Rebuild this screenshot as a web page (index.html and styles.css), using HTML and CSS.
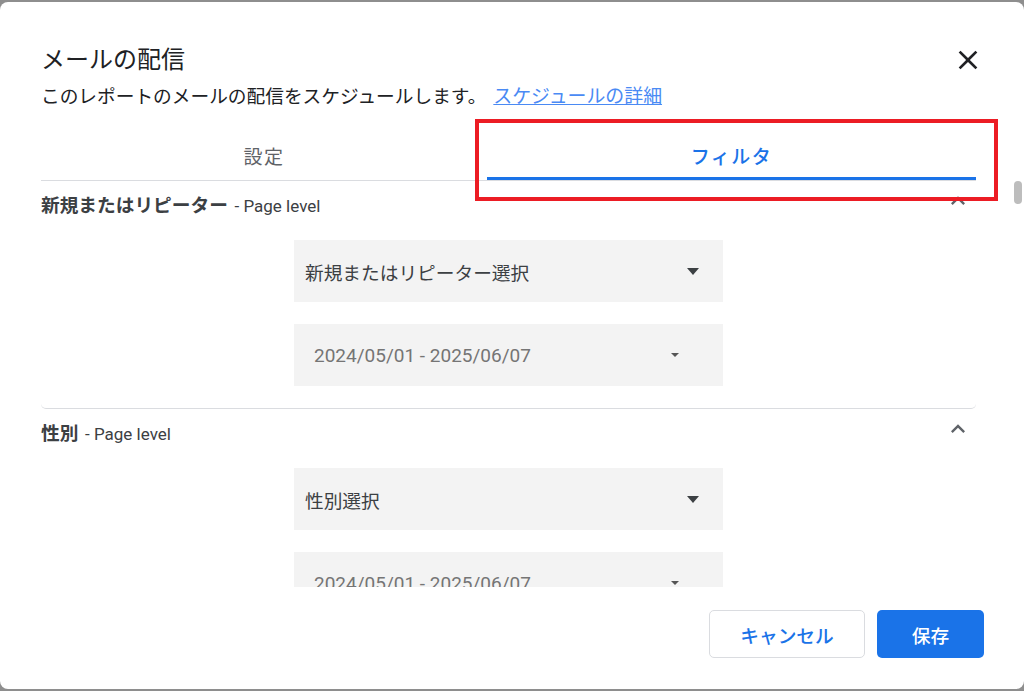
FILE: index.html
```html
<!DOCTYPE html>
<html lang="ja">
<head>
<meta charset="utf-8">
<title>メールの配信</title>
<link rel="stylesheet" href="styles.css">
</head>
<body>
<div class="page">
  <div class="dialog">
    <div class="header">
      <div class="title-row">
        <h1 class="title">メールの配信</h1>
        <svg class="close" viewBox="0 0 24 24" width="32" height="32"><path d="M19 6.41L17.59 5 12 10.59 6.41 5 5 6.41 10.59 12 5 17.59 6.41 19 12 13.41 17.59 19 19 17.59 13.41 12z" fill="#202124"/></svg>
      </div>
      <p class="subtitle">このレポートのメールの配信をスケジュールします。<a class="link" href="#">スケジュールの詳細</a></p>
    </div>
    <div class="tabs">
      <div class="tab">設定</div>
      <div class="tab active">フィルタ</div>
    </div>
    <div class="scroll">
      <div class="section">
        <div class="section-head">
          <span class="section-title"><b>新規またはリピーター</b> <span class="level">- Page level</span></span>
          <svg class="chev" viewBox="0 0 24 24" width="28" height="28"><path d="M12 8l-6 6 1.41 1.41L12 10.83l4.59 4.58L18 14z" fill="#5f6368"/></svg>
        </div>
        <div class="fields">
          <div class="select"><span>新規またはリピーター選択</span><i class="tri"></i></div>
          <div class="select date"><span>2024/05/01 - 2025/06/07</span><i class="tri small"></i></div>
        </div>
      </div>
      <div class="section">
        <div class="section-head">
          <span class="section-title"><b>性別</b> <span class="level">- Page level</span></span>
          <svg class="chev" viewBox="0 0 24 24" width="28" height="28"><path d="M12 8l-6 6 1.41 1.41L12 10.83l4.59 4.58L18 14z" fill="#5f6368"/></svg>
        </div>
        <div class="fields">
          <div class="select"><span>性別選択</span><i class="tri"></i></div>
          <div class="select date"><span>2024/05/01 - 2025/06/07</span><i class="tri small"></i></div>
        </div>
      </div>
    </div>
    <div class="footer">
      <button class="btn cancel">キャンセル</button>
      <button class="btn save">保存</button>
    </div>
    <div class="scroll-thumb"></div>
    <div class="highlight"></div>
  </div>
</div>
</body>
</html>
```
FILE: styles.css
```css
* { box-sizing: border-box; }
html, body { margin: 0; padding: 0; }
body {
  background: #8e8e8e;
  font-family: Roboto, "Noto Sans CJK JP", sans-serif;
  color: #202124;
  width: 1024px;
  height: 691px;
  overflow: hidden;
}
.page { padding-top: 2px; }
.dialog {
  position: relative;
  background: #fff;
  height: 687px;
  border-radius: 8px;
  display: flex;
  flex-direction: column;
}
.header { padding: 43px 40px 22px 41px; }
.title-row {
  display: flex;
  justify-content: space-between;
  align-items: center;
  height: 30px;
}
.title {
  margin: 0;
  font-size: 24px;
  line-height: 30px;
  font-weight: 400;
  color: #202124;
}
.close { display: block; margin-right: 0; }
.subtitle {
  margin: 10px 0 0;
  font-size: 18.7px;
  line-height: 24px;
  color: #202124;
}
.link { color: #4a8af4; text-decoration: underline; margin-left: 7px; font-size: 18.9px; }
.tabs {
  display: grid;
  grid-template-columns: 446px 489px;
  margin: 0 48px 0 41px;
  border-bottom: 1px solid #dadce0;
  height: 50px;
}
.tab {
  display: flex;
  align-items: center;
  justify-content: center;
  font-size: 19px;
  letter-spacing: 1.5px;
  color: #5f6368;
  height: 49px;
  border-bottom: 3px solid transparent;
  padding-top: 2px;
}
.tab.active {
  color: #1a73e8;
  font-weight: 500;
  border-bottom-color: #1a73e8;
}
.scroll {
  height: 406px;
  overflow: hidden;
  padding: 0 48px 0 41px;
}
.section {
  padding: 13px 0 22px;
  border-bottom: 1px solid #dadce0;
  border-radius: 0 0 5px 5px;
}
.section-head {
  display: flex;
  justify-content: space-between;
  align-items: center;
  height: 24px;
  margin-bottom: 22px;
}
.section-title { font-size: 18.7px; line-height: 24px; color: #3c4043; white-space: nowrap; }
.section-title b { font-weight: 700; }
.level { font-size: 17px; font-weight: 400; margin-left: 2px; }
.chev { display: block; margin: 0 4px 10px 0; }
.fields {
  display: flex;
  flex-direction: column;
  align-items: center;
  gap: 22px;
}
.select {
  width: 429px;
  height: 62px;
  background: #f3f3f3;
  display: flex;
  align-items: center;
  justify-content: space-between;
  padding: 0 24px 0 11px;
  font-size: 18.7px;
  color: #3c4043;
}
.select.date { color: #757575; padding: 0 44px 0 20px; font-size: 19px; }
.tri {
  display: block;
  width: 0;
  height: 0;
  border-left: 6px solid transparent;
  border-right: 6px solid transparent;
  border-top: 7px solid #3c4043;
}
.tri.small {
  border-left-width: 4.5px;
  border-right-width: 4.5px;
  border-top: 4.5px solid #555;
}
.footer {
  display: flex;
  justify-content: flex-end;
  gap: 12px;
  padding: 23px 40px 0 0;
  height: 102px;
}
.btn {
  height: 48px;
  border-radius: 5px;
  font-family: Roboto, "Noto Sans CJK JP", sans-serif;
  font-size: 18.7px;
  font-weight: 500;
  cursor: pointer;
}
.cancel {
  width: 156px;
  background: #fff;
  border: 1px solid #dadce0;
  color: #1a73e8;
}
.save {
  width: 107px;
  background: #1a73e8;
  border: none;
  color: #fff;
}
.scroll-thumb {
  position: absolute;
  right: 2px;
  top: 179px;
  width: 8px;
  height: 23px;
  border-radius: 4px;
  background: #bdbdbd;
}
.highlight {
  position: absolute;
  left: 475px;
  top: 117px;
  width: 523px;
  height: 82px;
  border: 4px solid #ec1c24;
  pointer-events: none;
}
```
